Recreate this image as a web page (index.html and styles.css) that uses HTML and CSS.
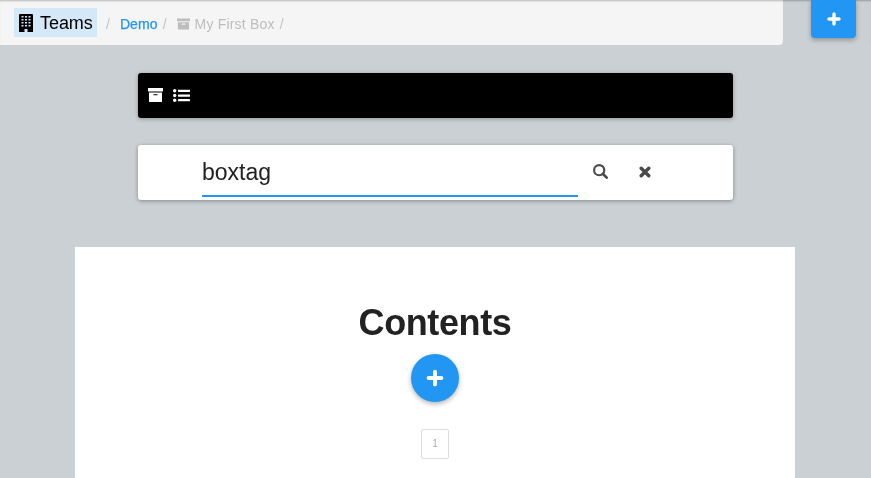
FILE: index.html
```html
<!DOCTYPE html>
<html lang="en">
<head>
<meta charset="utf-8">
<title>Contents</title>
<link rel="stylesheet" href="styles.css">
</head>
<body>
<header class="topbar">
  <nav class="crumbs">
    <a class="team">
      <svg class="team-icon" viewBox="0 0 14 18"><path fill="#000" fill-rule="evenodd" d="M1 0h12a1 1 0 0 1 1 1v17H8.500v-3h-3v3H0V1a1 1 0 0 1 1-1zM2.500 2v1.500h2V2zM6 2v1.500h2V2zM9.500 2v1.500h2V2zM2.500 5v1.500h2V5zM6 5v1.500h2V5zM9.500 5v1.500h2V5zM2.500 8v1.500h2V8zM6 8v1.500h2V8zM9.500 8v1.500h2V8zM2.500 11v1.500h2V11zM6 11v1.500h2V11zM9.500 11v1.500h2V11z"/></svg>
      <span class="team-name">Teams</span>
    </a>
    <span class="sep sep-first">/</span>
    <a class="demo">Demo</a>
    <span class="sep">/</span>
    <svg class="box-icon" viewBox="0 0 14 12"><path fill="#bdbdbd" fill-rule="evenodd" d="M0 0h14v3H0zM1 4h12v8H1zM5 5.500v1.200h4V5.500z"/></svg>
    <span class="box-name">My First Box</span>
    <span class="sep">/</span>
  </nav>
  <button class="add-square" aria-label="Add"><svg class="plus plus-small" viewBox="0 0 14 14"><path d="M7 2v10M2 7h10"/></svg></button>
</header>
<main class="page">
  <section class="toolbar">
    <svg class="tool-box" viewBox="0 0 15 14"><path fill="#fff" fill-rule="evenodd" d="M0 0h15v3.500H0zM1 4.500h13V14H1zM5.500 6.200v1.100h4V6.200z"/></svg>
    <svg class="tool-list" viewBox="0 0 17 13"><g fill="#fff"><circle cx="1.700" cy="1.800" r="1.700"/><circle cx="1.700" cy="6.500" r="1.700"/><circle cx="1.700" cy="11.200" r="1.700"/><rect x="5" y="0.700" width="12" height="2.300" rx=".4"/><rect x="5" y="5.400" width="12" height="2.300" rx=".4"/><rect x="5" y="10" width="12" height="2.300" rx=".4"/></g></svg>
  </section>
  <section class="search">
    <div class="search-field">boxtag</div>
    <svg class="search-icon" viewBox="0 0 15 15"><circle cx="6.200" cy="6.200" r="5.100" fill="none" stroke="#4a4a4a" stroke-width="2.100"/><path d="M10 10l3.700 3.700" stroke="#4a4a4a" stroke-width="2.600" stroke-linecap="round"/></svg>
    <svg class="clear-icon" viewBox="0 0 12 12"><path d="M2.200 2.200l7.600 7.600M9.800 2.200l-7.600 7.600" stroke="#4a4a4a" stroke-width="3.400" stroke-linecap="round"/></svg>
  </section>
  <section class="content">
    <h1>Contents</h1>
    <button class="add-round" aria-label="Add"><svg class="plus" viewBox="0 0 14 14"><path d="M7 2v10M2 7h10"/></svg></button>
    <div class="pager">1</div>
  </section>
</main>
</body>
</html>
```

FILE: styles.css
```css
html, body {
  margin: 0;
  height: 100%;
  overflow: hidden;
}
body {
  background: #cad0d3;
  font-family: "Liberation Sans", Arial, sans-serif;
  color: #222;
}
.topbar {
  display: flex;
  align-items: flex-start;
  gap: 28px;
  box-shadow: inset 0 2px 2px -1px rgba(0, 0, 0, .25);
  will-change: transform;
}
.crumbs {
  width: 783px;
  height: 45px;
  box-sizing: border-box;
  padding: 8px 0 0 14px;
  display: flex;
  align-items: flex-start;
  background: #f5f5f5;
  border-radius: 0 0 4px 0;
  box-shadow: inset 0 2px 2px -1px rgba(0, 0, 0, .25);
  font-size: 14px;
}
.team {
  display: flex;
  align-items: center;
  gap: 7px;
  height: 29px;
  width: 83px;
  box-sizing: border-box;
  padding-left: 5px;
  background: #d4e8f7;
  color: #000;
  font-size: 18px;
}
.team-name {
  margin-top: 1px;
  letter-spacing: -.05px;
}
.team-icon {
  width: 14px;
  height: 18px;
}
.sep {
  margin-top: 8px;
  color: #c4c4c4;
  margin-left: 5px;
  margin-right: 10px;
}
.sep-first {
  margin-left: 9px;
  margin-right: 9px;
}
.demo {
  margin: 8px 0 0 1px;
  color: #2196f3;
  letter-spacing: .1px;
  -webkit-text-stroke: .25px #2196f3;
}
.box-icon {
  width: 13px;
  height: 12px;
  margin: 10px 5px 0 0;
}
.box-name {
  margin-top: 8px;
  color: #bdbdbd;
  letter-spacing: .2px;
}
.add-square {
  width: 45px;
  height: 38px;
  padding: 0;
  border: 0;
  border-radius: 0 0 4px 4px;
  background: #2196f3;
  box-shadow: 0 2px 5px rgba(0, 0, 0, .3);
  display: flex;
  align-items: center;
  justify-content: center;
}
.plus {
  width: 18px;
  height: 18px;
  fill: none;
  stroke: #fff;
  stroke-width: 3;
  stroke-linecap: round;
}
.plus-small {
  width: 14px;
  height: 14px;
  stroke-width: 3.4;
}
.page {
  display: flex;
  flex-direction: column;
  align-items: center;
  will-change: transform;
}
.toolbar {
  width: 595px;
  height: 45px;
  margin-top: 28px;
  box-sizing: border-box;
  padding: 0 0 1px 10px;
  display: flex;
  align-items: center;
  gap: 10px;
  background: #000;
  border-radius: 3px;
  box-shadow: 0 1px 4px rgba(0, 0, 0, .3);
}
.tool-box {
  width: 15px;
  height: 14px;
}
.tool-list {
  width: 17px;
  height: 13px;
}
.search {
  width: 595px;
  height: 55px;
  margin-top: 27px;
  box-sizing: border-box;
  padding-left: 64px;
  display: flex;
  align-items: flex-start;
  background: #fff;
  border-radius: 3px;
  box-shadow: 0 1px 4px rgba(0, 0, 0, .35);
}
.search-field {
  width: 376px;
  height: 52px;
  box-sizing: border-box;
  padding-top: 13px;
  border-bottom: 2px solid #2196f3;
  font-size: 23px;
  line-height: 28px;
  color: #222;
}
.search-icon {
  width: 15px;
  height: 15px;
  margin: 19px 0 0 15px;
}
.clear-icon {
  width: 12px;
  height: 12px;
  margin: 21px 0 0 31px;
}
.content {
  width: 720px;
  height: 231px;
  margin: 47px 0 0 -1px;
  padding-top: 54px;
  box-sizing: border-box;
  display: flex;
  flex-direction: column;
  align-items: center;
  background: #fff;
}
h1 {
  margin: 0;
  font-size: 36px;
  line-height: 44px;
  font-weight: 700;
  letter-spacing: -.4px;
  color: #222;
}
.add-round {
  width: 48px;
  height: 48px;
  margin-top: 9px;
  padding: 0;
  border: 0;
  border-radius: 50%;
  background: #2196f3;
  box-shadow: 0 2px 5px rgba(0, 0, 0, .3);
  display: flex;
  align-items: center;
  justify-content: center;
}
.pager {
  width: 28px;
  height: 30px;
  margin-top: 27px;
  box-sizing: border-box;
  border: 1px solid #ddd;
  border-radius: 2px;
  color: #aaa;
  font-size: 10px;
  line-height: 28px;
  text-align: center;
}
```
